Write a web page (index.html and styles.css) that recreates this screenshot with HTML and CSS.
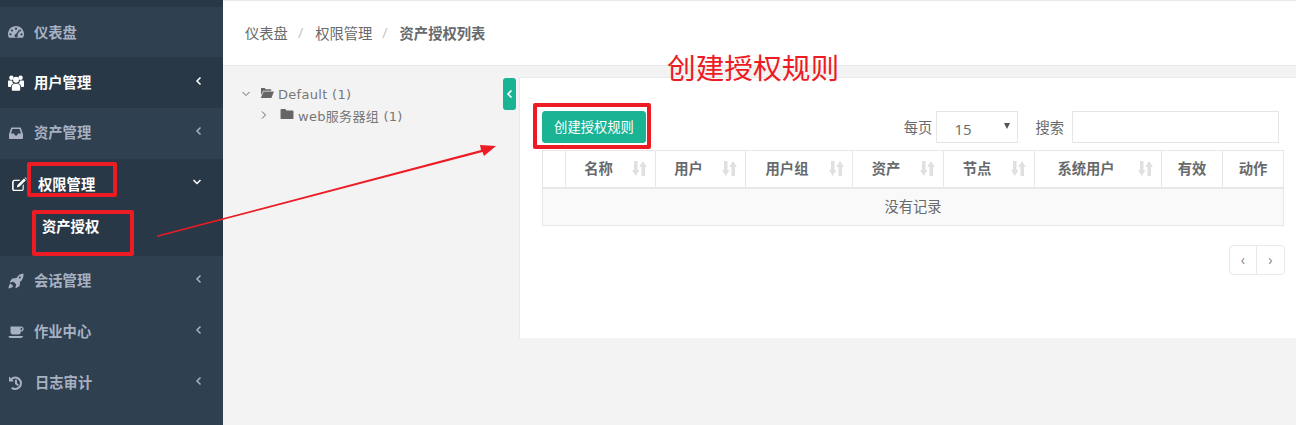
FILE: index.html
```html
<!DOCTYPE html>
<html lang="zh-CN">
	<head>
		<meta charset="UTF-8" />
		<meta name="viewport" content="width=device-width, initial-scale=1.0" />
		<title>资产授权列表</title>
		<link rel="stylesheet" href="styles.css">
	</head>
	<body>
		<div class="page">
			<nav class="sidebar">
				<div class="sidebar-top"></div>
				<a class="nav-item">
					<svg class="nav-icon" viewBox="0 0 16 16"><path fill-rule="evenodd" d="M8 2C3.600 2 0 5.600 0 10c0 1.400.3 2.600 1 3.700h14c.7-1.100 1-2.300 1-3.700 0-4.400-3.600-8-8-8zM8 3.600a1.100 1.100 0 1 1 0 2.200 1.100 1.100 0 0 1 0-2.200zM4 5.400a1.100 1.100 0 1 1 0 2.200 1.100 1.100 0 0 1 0-2.200zm8 0a1.100 1.100 0 1 1 0 2.200 1.100 1.100 0 0 1 0-2.200zM2.500 9.200a1.100 1.100 0 1 1 0 2.200 1.100 1.100 0 0 1 0-2.200zm11 0a1.100 1.100 0 1 1 0 2.200 1.100 1.100 0 0 1 0-2.200zM10.700 6l.8.4-2 4.500a1.600 1.600 0 1 1-1.400-.8z"/></svg>
					<span class="nav-label">仪表盘</span>
				</a>
				<a class="nav-item nav-dark nav-on">
					<svg class="nav-icon" viewBox="0 0 16 16"><circle cx="3.400" cy="2.800" r="2.200"/><circle cx="12.600" cy="2.800" r="2.200"/><circle cx="8" cy="4.800" r="3"/><path d="M0 6.500c0-.6.500-1 1-1h3c.1 1.200.6 2.200 1.500 3C4.100 9 3 10.200 2.900 12H1c-.6 0-1-.4-1-1zM16 6.500c0-.6-.5-1-1-1h-3c-.1 1.200-.6 2.200-1.500 3 1.400.5 2.500 1.700 2.600 3.500H15c.6 0 1-.4 1-1zM3.800 12c0-1.900 1.300-3.200 2.900-3.200h2.600c1.600 0 2.900 1.300 2.900 3.200v2.500c0 .8-.6 1.300-1.300 1.300H5.100c-.7 0-1.300-.5-1.300-1.300z"/></svg>
					<span class="nav-label">用户管理</span>
					<svg class="nav-arrow" viewBox="0 0 8 10"><path d="M5.500 1.500 2 5l3.500 3.500"/></svg>
				</a>
				<a class="nav-item nav-lift">
					<svg class="nav-icon" viewBox="0 0 16 16"><path fill-rule="evenodd" d="M3.300 2.500h9.400L15 9v4c0 .6-.4 1-1 1H2c-.6 0-1-.4-1-1V9zM4.500 4 3 8.500h3l1 2h2l1-2h3L11.500 4z"/></svg>
					<span class="nav-label">资产管理</span>
					<svg class="nav-arrow" viewBox="0 0 8 10"><path d="M5.500 1.500 2 5l3.500 3.500"/></svg>
				</a>
				<div class="nav-group">
					<a class="nav-item nav-dark nav-on nav-open">
						<svg class="nav-icon nav-icon-edit" viewBox="0 0 16 16"><path d="M2.500 3h6.500L7.800 4.200H2.800c-.6 0-1 .4-1 1v7.500c0 .6.400 1 1 1h7.500c.6 0 1-.4 1-1V9l1.200-1.200v5c0 1.200-1 2.200-2.200 2.200h-8c-1.200 0-2.200-1-2.200-2.200V5.200C.6 4 1.300 3 2.500 3z"/><path d="M12.800 1.500l2 2-7 7-2.600.6.600-2.600zM13.500.8l.7-.5 1.700 1.700-.6.700z"/></svg>
						<span class="nav-label">权限管理</span>
						<svg class="nav-arrow nav-arrow-down" viewBox="0 0 10 8"><path d="M1.500 2 5 5.500 8.500 2"/></svg>
					</a>
					<a class="nav-sub">资产授权</a>
				</div>
				<a class="nav-item nav-lift">
					<svg class="nav-icon" viewBox="0 0 16 16"><path fill-rule="evenodd" d="M15.500.5c.2 3.500-.8 6.300-3.400 8.300l-.5 4.200-3.600 2.300-.6-.6.800-3.300-2.600-2.600-3.300.8-.6-.6L4.200 5.400 8.500 5C10.100 2.200 12.200.7 15.500.5zM11.800 3.400a1 1 0 1 0 0 2 1 1 0 0 0 0-2z"/><path d="M2.500 10.500l2.800 2.800C4 14.800 2 15.300.4 15.500c.2-1.800.8-3.800 2.100-5z"/></svg>
					<span class="nav-label">会话管理</span>
					<svg class="nav-arrow" viewBox="0 0 8 10"><path d="M5.500 1.500 2 5l3.500 3.500"/></svg>
				</a>
				<a class="nav-item nav-lift">
					<svg class="nav-icon" viewBox="0 0 16 16"><path fill-rule="evenodd" d="M2.500 2.500h10.800c1.300 0 2.400 1 2.400 2.500s-1.100 2.500-2.400 2.500h-.6v1c0 1.200-.9 2-2 2H5c-1.400 0-2.500-.9-2.500-2.200zM12.700 3.800v2.400h.5c.7 0 1.100-.5 1.100-1.200s-.4-1.200-1.100-1.200zM.5 12h14.500c0 1.100-.9 2-2 2H2.500c-1.100 0-2-.9-2-2z"/></svg>
					<span class="nav-label">作业中心</span>
					<svg class="nav-arrow" viewBox="0 0 8 10"><path d="M5.500 1.500 2 5l3.500 3.500"/></svg>
				</a>
				<a class="nav-item nav-lift">
					<svg class="nav-icon" viewBox="0 0 16 16"><path d="M1 1.500 2.800 3.300A6.700 6.700 0 1 1 3 13.500l1.500-1.500a4.600 4.600 0 1 0-.2-7.300L6 6.500H1z"/><path d="M7 4.800h2v3.300l1.900 1.700-1.200 1.300L7 8.900z"/></svg>
					<span class="nav-label nav-label-log">日志审计</span>
					<svg class="nav-arrow" viewBox="0 0 8 10"><path d="M5.500 1.500 2 5l3.500 3.500"/></svg>
				</a>
			</nav>

			<main class="main">
				<header class="crumbs">
					<a>仪表盘</a>
					<span class="crumb-sep">/</span>
					<a>权限管理</a>
					<span class="crumb-sep">/</span>
					<strong>资产授权列表</strong>
				</header>

				<div class="content">
					<aside class="tree">
						<div class="tree-row">
							<svg class="tree-caret" viewBox="0 0 10 10"><path d="M1.500 3 5 6.500 8.500 3"/></svg>
							<svg class="tree-icon" viewBox="0 0 15 13"><path d="M1 1h4l1.200 1.500H12V4H3.500L1 9zM3.800 5H15l-2.700 7H.8z"/></svg>
							<span>Default (1)</span>
						</div>
						<div class="tree-row tree-child">
							<svg class="tree-caret" viewBox="0 0 10 10"><path d="M3 1.500 6.500 5 3 8.500"/></svg>
							<svg class="tree-icon" viewBox="0 0 15 13"><path d="M1.500 1h4.200L7 2.700h6.500c.6 0 1 .4 1 1v7.300c0 .6-.4 1-1 1h-12c-.6 0-1-.4-1-1v-9c0-.6.400-1 1-1z"/></svg>
							<span>web服务器组 (1)</span>
						</div>
					</aside>

					<div class="tree-toggle">
						<svg viewBox="0 0 8 10"><path d="M5.500 1.500 2 5l3.500 3.500"/></svg>
					</div>

					<section class="panel">
						<div class="toolbar">
							<button class="btn-create" type="button">创建授权规则</button>
							<div class="filters">
								<label class="filter-label">每页</label>
								<div class="page-size">
									<span>15</span>
									<i class="select-caret"></i>
								</div>
								<label class="filter-label filter-search">搜索</label>
								<input class="search-box" type="text" />
							</div>
						</div>

						<table class="rules">
							<thead>
								<tr>
									<th class="col-check"></th>
									<th class="col-name sortable">名称<svg class="sort-icon" viewBox="0 0 15 15"><path d="M2 0h3.500v9h2L3.700 15 0 9h2zM11 0l3.900 6H13v9H9.500V6H7.200z"/></svg></th>
									<th class="col-user sortable">用户<svg class="sort-icon" viewBox="0 0 15 15"><path d="M2 0h3.500v9h2L3.700 15 0 9h2zM11 0l3.900 6H13v9H9.500V6H7.200z"/></svg></th>
									<th class="col-group sortable">用户组<svg class="sort-icon" viewBox="0 0 15 15"><path d="M2 0h3.500v9h2L3.700 15 0 9h2zM11 0l3.900 6H13v9H9.500V6H7.200z"/></svg></th>
									<th class="col-asset sortable">资产<svg class="sort-icon" viewBox="0 0 15 15"><path d="M2 0h3.500v9h2L3.700 15 0 9h2zM11 0l3.900 6H13v9H9.500V6H7.200z"/></svg></th>
									<th class="col-node sortable">节点<svg class="sort-icon" viewBox="0 0 15 15"><path d="M2 0h3.500v9h2L3.700 15 0 9h2zM11 0l3.900 6H13v9H9.500V6H7.200z"/></svg></th>
									<th class="col-sys sortable">系统用户<svg class="sort-icon" viewBox="0 0 15 15"><path d="M2 0h3.500v9h2L3.700 15 0 9h2zM11 0l3.900 6H13v9H9.500V6H7.200z"/></svg></th>
									<th class="col-valid">有效</th>
									<th class="col-action">动作</th>
								</tr>
							</thead>
							<tbody>
								<tr>
									<td colspan="9">没有记录</td>
								</tr>
							</tbody>
						</table>

						<div class="pager">
							<a>‹</a>
							<a>›</a>
						</div>
					</section>
				</div>
			</main>

			<!-- red notes drawn on top of the screenshot -->
			<div class="mark mark-perm"></div>
			<div class="mark mark-asset"></div>
			<div class="mark mark-btn"></div>
			<div class="note">创建授权规则</div>
			<svg class="note-arrow" viewBox="0 0 1296 425"><path d="M157 235.500 481 150 480 145 496 146 484 156 482.500 152 157 237z"/></svg>
		</div>
	</body>
</html>
```

FILE: styles.css
```css
* {
	box-sizing: border-box;
}
body {
	margin: 0;
	font-family: "Open Sans", "Noto Sans CJK SC", sans-serif;
	font-size: 14.3px;
	color: #676a6c;
	background-color: #f3f3f4;
	overflow: hidden;
}
.page {
	position: relative;
	display: flex;
	width: 1296px;
	height: 425px;
	overflow: hidden;
}

/* sidebar */
.sidebar {
	flex: 0 0 223px;
	background-color: #2f4050;
}
.sidebar-top {
	height: 7px;
	background-color: #293846;
}
.nav-item {
	display: flex;
	align-items: center;
	height: 51px;
	padding-left: 8px;
	color: #a7b1c2;
	font-weight: 600;
}
.nav-item:first-of-type {
	height: 50px;
}
.nav-lift {
	padding-bottom: 2px;
}
.nav-dark {
	background-color: #293846;
}
.nav-on {
	color: #fff;
}
.nav-icon {
	flex: 0 0 16px;
	width: 16px;
	height: 16px;
	fill: currentColor;
}
.nav-label {
	width: 156px;
	margin-left: 10px;
	padding-bottom: 2px;
}
.nav-label-log {
	width: 155px;
	margin-left: 11px;
}
.nav-arrow {
	width: 8px;
	height: 10px;
	margin: -4px 0 0 5px;
	fill: none;
	stroke: currentColor;
	stroke-width: 1.5;
}
.nav-group {
	height: 97px;
	background-color: #293846;
}
.nav-open {
	height: 47px;
	padding-left: 12px;
}
.nav-open .nav-label {
	width: 149px;
	margin-left: 11px;
}
.nav-icon-edit {
	flex-basis: 15px;
	width: 15px;
	height: 15px;
}
.nav-arrow-down {
	width: 10px;
	height: 8px;
	margin-top: -4px;
	margin-left: 5px;
}
.nav-sub {
	display: block;
	padding: 9px 0 0 42px;
	color: #fff;
	font-weight: 600;
	line-height: 18px;
}

/* breadcrumb */
.main {
	flex: 1;
	display: flex;
	flex-direction: column;
	min-width: 0;
}
.crumbs {
	display: flex;
	align-items: center;
	gap: 10px;
	height: 66px;
	padding: 0 0 2px 22px;
	background-color: #fff;
	border-top: 1px solid #e7eaec;
	border-bottom: 1px solid #e7eaec;
}
.crumb-sep {
	color: #c4c4c4;
}
.crumb-sep + a {
	margin-left: 2px;
}
.crumbs strong {
	margin-left: 2px;
	font-weight: 600;
}

/* tree + panel */
.content {
	flex: 1;
	display: flex;
	align-items: flex-start;
	padding-top: 11px;
}
.tree {
	flex: 0 0 280px;
	padding: 6px 0 0 18px;
}
.tree-row {
	display: flex;
	align-items: center;
	height: 22px;
	font-family: "DejaVu Sans", "Noto Sans CJK SC", sans-serif;
	font-size: 13px;
	letter-spacing: 0.3px;
	color: #777;
}
.tree-child {
	margin-top: -1px;
	padding-left: 18px;
}
.tree-caret {
	width: 10px;
	height: 10px;
	fill: none;
	stroke: #666;
	stroke-width: 1;
}
.tree-icon {
	width: 14px;
	height: 12px;
	margin: -2px 4px 0 9px;
	fill: #666;
}
.tree-child .tree-icon {
	margin-left: 11px;
}
.tree-toggle {
	flex: 0 0 13px;
	display: flex;
	align-items: center;
	justify-content: center;
	height: 32px;
	margin-top: 1px;
	background-color: #1ab394;
	border-radius: 3px;
}
.tree-toggle svg {
	width: 8px;
	height: 10px;
	fill: none;
	stroke: #fff;
	stroke-width: 1.6;
}
.panel {
	flex: 0 0 777px;
	height: 261px;
	margin-left: 3px;
	padding: 33px 0 0 22px;
	background-color: #fff;
	border-top: 1px solid #e7eaec;
	border-left: 1px solid #e7eaec;
}
.toolbar {
	display: flex;
	justify-content: space-between;
	height: 39px;
	padding-right: 17px;
}
.btn-create {
	width: 104px;
	height: 32px;
	padding: 0 0 2px;
	color: #fff;
	font-family: inherit;
	font-size: 13.3px;
	background-color: #1ab394;
	border: 1px solid #1ab394;
	border-radius: 3px;
}
.filters {
	display: flex;
	height: 32px;
	align-items: center;
}
.filter-label {
	margin-right: 4px;
	padding-bottom: 2px;
}
.filter-search {
	margin-left: 17px;
	margin-right: 8px;
}
.page-size {
	position: relative;
	width: 82px;
	height: 32px;
	padding: 4px 0 0 17px;
	font-size: 15px;
	line-height: 26px;
	background-color: #fff;
	border: 1px solid #e5e6e7;
}
.select-caret {
	position: absolute;
	top: 11px;
	right: 7px;
	border-top: 6px solid #555;
	border-left: 3px solid transparent;
	border-right: 3px solid transparent;
}
.search-box {
	width: 207px;
	height: 32px;
	background-color: #fff;
	border: 1px solid #e5e6e7;
}

/* table */
.rules {
	width: 741px;
	table-layout: fixed;
	border-collapse: collapse;
}
.rules th,
.rules td {
	padding: 0 0 2px;
	text-align: center;
	border: 1px solid #e7e7e7;
}
.rules th {
	position: relative;
	height: 37px;
	font-weight: 600;
	background-color: #fff;
	border-bottom-width: 2px;
}
.rules td {
	height: 38px;
	background-color: #f9f9f9;
}
.col-check { width: 23px; }
.col-name { width: 90px; }
.col-user { width: 90px; }
.col-group { width: 107px; }
.col-asset { width: 91px; }
.col-node { width: 91px; }
.col-sys { width: 127px; }
.col-valid { width: 61px; }
.col-action { width: 61px; }
.rules .sortable {
	padding-right: 24px;
}
.sort-icon {
	position: absolute;
	top: 10px;
	right: 8px;
	width: 15px;
	height: 15px;
	fill: #e0e0e0;
}

/* pager */
.pager {
	display: flex;
	justify-content: flex-end;
	margin-top: 19px;
	margin-right: 11px;
}
.pager a {
	width: 29px;
	height: 30px;
	color: #888;
	line-height: 27px;
	text-align: center;
	background-color: #fff;
	border: 1px solid #e7eaec;
}
.pager a:first-child {
	width: 28px;
	border-radius: 4px 0 0 4px;
}
.pager a:last-child {
	margin-left: -1px;
	border-radius: 0 4px 4px 0;
}

/* red notes */
.mark {
	position: absolute;
	border: 4px solid #ed1c24;
	border-radius: 2px;
}
.mark-perm {
	left: 27px;
	top: 162px;
	width: 90px;
	height: 35px;
}
.mark-asset {
	left: 32px;
	top: 210px;
	width: 102px;
	height: 46px;
}
.mark-btn {
	left: 533px;
	top: 103px;
	width: 118px;
	height: 46px;
}
.note {
	position: absolute;
	left: 667px;
	top: 48px;
	color: #ed1c24;
	font-size: 28.7px;
	line-height: 40px;
}
.note-arrow {
	position: absolute;
	left: 0;
	top: 0;
	width: 1296px;
	height: 425px;
	fill: #ed1c24;
	pointer-events: none;
}
```
